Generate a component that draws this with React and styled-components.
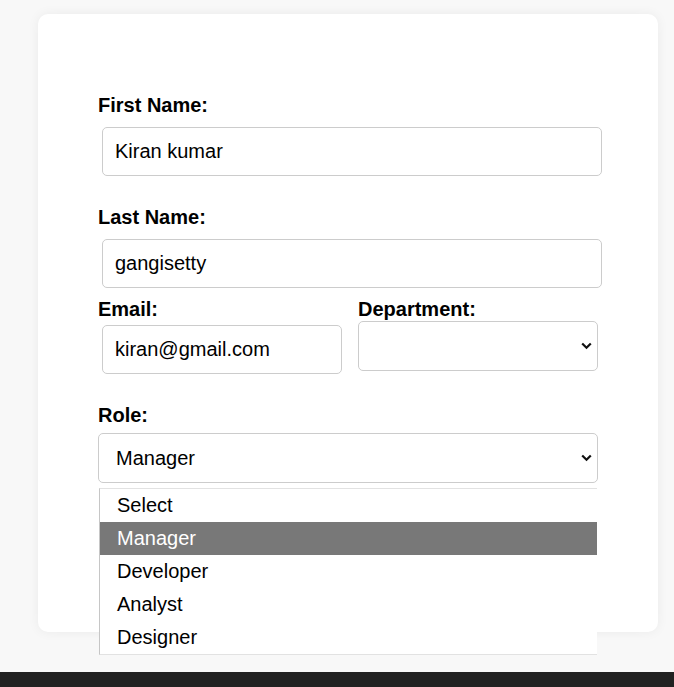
import React from 'react';
import styled, { createGlobalStyle } from 'styled-components';

const GlobalStyle = createGlobalStyle`
    * { box-sizing: border-box; }
    html, body {
        margin: 0;
        padding: 0;
        background: #f8f8f8;
        font-family: "Liberation Sans", Arial, sans-serif;
        color: #000;
    }
`;

const Page = styled.div`
    padding: 14px 16px 40px 38px;
`;

const Card = styled.div`
    width: 620px;
    height: 618px;
    background: #fff;
    border-radius: 10px;
    box-shadow: 0 0 12px rgba(0, 0, 0, 0.06);
    padding: 80px 60px 0 60px;
`;

const Group = styled.div`
    position: relative;
    margin-bottom: ${props => props.mb || 0}px;
`;

const Row = styled.div`
    display: grid;
    grid-template-columns: 240px 240px;
    column-gap: 20px;
    margin-bottom: 26px;
`;

const Label = styled.label`
    display: block;
    font-size: 20px;
    line-height: 23px;
    font-weight: bold;
    margin-bottom: ${props => props.mb ?? 10}px;
`;

const Input = styled.input`
    display: block;
    width: 100%;
    margin: 4px 0 4px 4px;
    height: 49px;
    padding: 0 12px;
    font-family: inherit;
    font-size: 20px;
    color: #000;
    border: 1px solid #ccc;
    border-radius: 5px;
    outline: none;
    background: #fff;
`;

const SelectWrap = styled.div`
    position: relative;
`;

const Select = styled.select`
    display: block;
    width: 100%;
    height: 50px;
    padding: 0 30px 0 17px;
    appearance: none;
    font-family: inherit;
    font-size: 20px;
    color: #000;
    border: 1px solid #ccc;
    border-radius: 5px;
    background: #fff;
    outline: none;
`;

const Chevron = styled.svg`
    position: absolute;
    right: 6px;
    top: 50%;
    margin-top: -4px;
    width: 11px;
    height: 8px;
    pointer-events: none;
`;

const Listbox = styled.ul`
    position: absolute;
    left: 1px;
    top: 84px;
    width: 498px;
    margin: 0;
    padding: 0;
    list-style: none;
    background: #fff;
    border-top: 1px solid #e2e2e2;
    border-left: 1px solid #c6c6c6;
    border-bottom: 1px solid #e2e2e2;
    z-index: 2;
`;

const Option = styled.li`
    height: 33px;
    line-height: 33px;
    padding-left: 17px;
    font-size: 20px;
    color: ${props => (props.active ? '#fff' : '#000')};
    background: ${props => (props.active ? '#787878' : '#fff')};
`;

const Footer = styled.div`
    height: 15px;
    background: #212121;
`;

const roles = ['Select', 'Manager', 'Developer', 'Analyst', 'Designer'];

function Dropdown({ value, options }) {
    return (
        <SelectWrap>
            <Select defaultValue={value}>
                {options.map(o => (
                    <option key={o} value={o}>{o}</option>
                ))}
            </Select>
            <Chevron viewBox="0 0 11 8">
                <path d="M1.2 1.5 L5.5 5.8 L9.8 1.5" fill="none" stroke="#111" strokeWidth="2.2" />
            </Chevron>
        </SelectWrap>
    );
}

export default function App() {
    return (
        <>
            <GlobalStyle />
            <Page>
                <Card>
                    <Group mb={30}>
                        <Label>First Name:</Label>
                        <Input defaultValue="Kiran kumar" />
                    </Group>
                    <Group mb={10}>
                        <Label>Last Name:</Label>
                        <Input defaultValue="gangisetty" />
                    </Group>
                    <Row>
                        <div>
                            <Label mb={0}>Email:</Label>
                            <Input defaultValue="kiran@gmail.com" />
                        </div>
                        <div>
                            <Label mb={0}>Department:</Label>
                            <Dropdown value="" options={['']} />
                        </div>
                    </Row>
                    <Group>
                        <Label mb={6}>Role:</Label>
                        <Dropdown value="Manager" options={roles} />
                        <Listbox>
                            {roles.map(r => (
                                <Option key={r} active={r === 'Manager'}>{r}</Option>
                            ))}
                        </Listbox>
                    </Group>
                </Card>
            </Page>
            <Footer />
        </>
    );
}
